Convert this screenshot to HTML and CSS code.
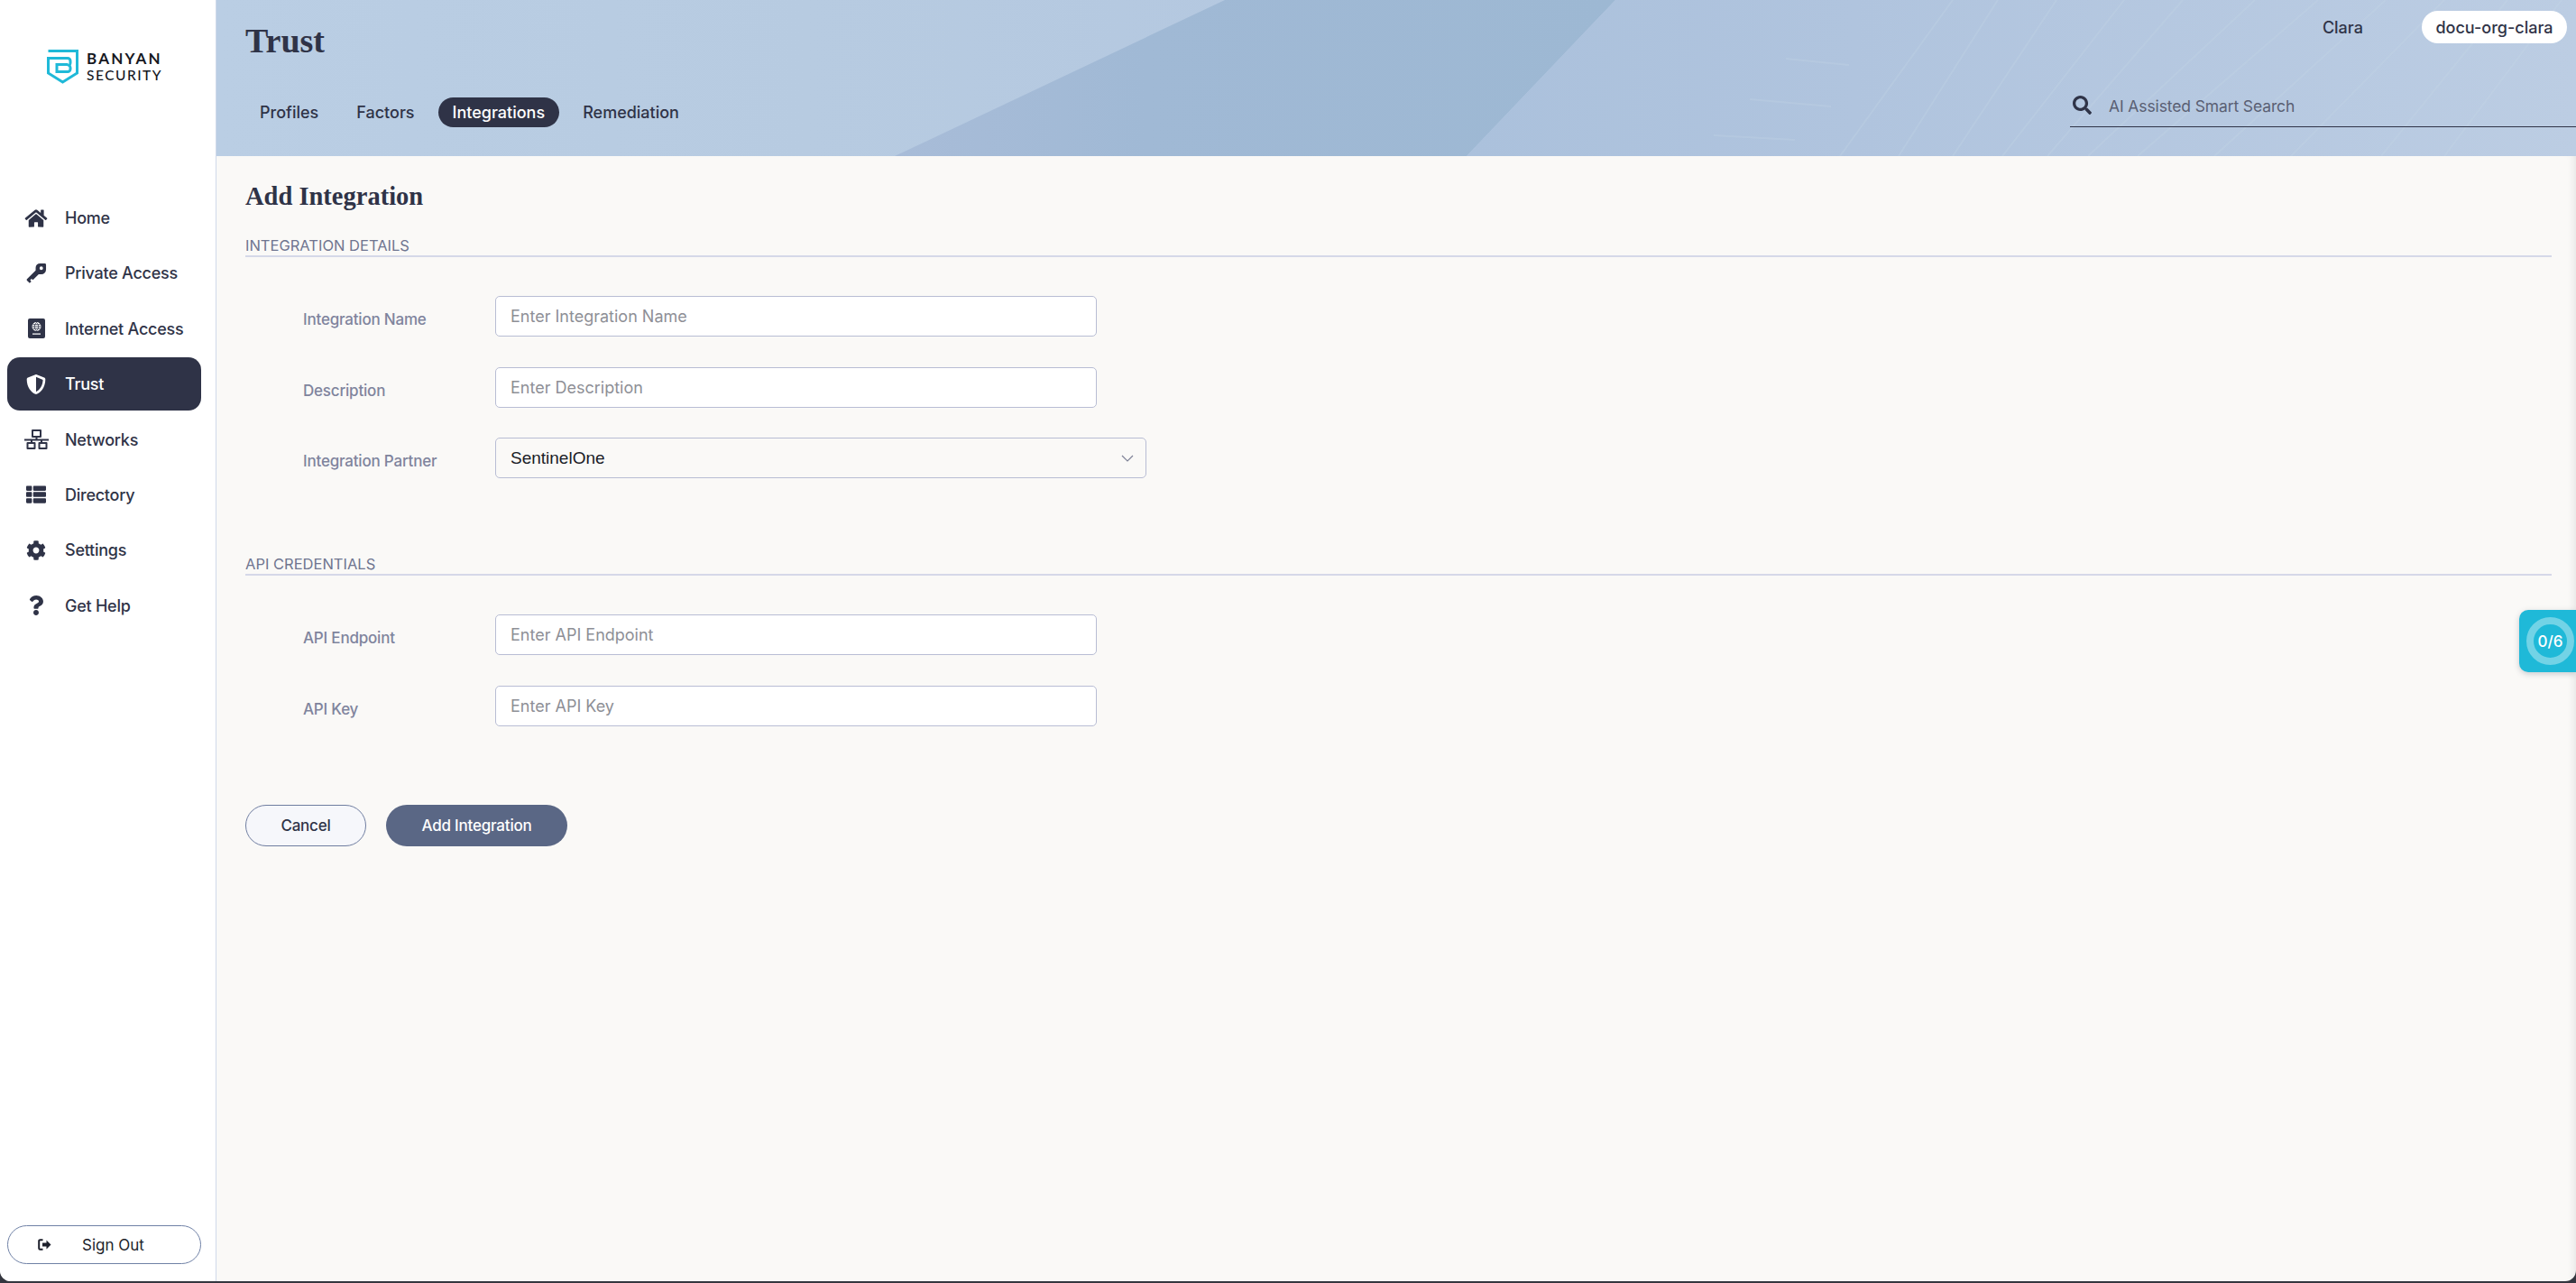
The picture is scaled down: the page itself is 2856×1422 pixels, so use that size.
FILE: index.html
```html
<!DOCTYPE html>
<html lang="en">
<head>
<meta charset="utf-8">
<title>Trust - Add Integration</title>
<link rel="stylesheet" href="styles.css">
</head>
<body>
<div class="app">
  <aside class="sidebar">
    <div class="brand">
      <svg class="brand-mark" viewBox="0 0 35 38" aria-hidden="true"><path d="M1.500 1.500H33.500V26L17.500 36L1.500 26V9.500H23a3 3 0 0 1 3 3v2.500a3 3 0 0 1-1.500 2.500a3 3 0 0 1 1.500 2.500v1.500a3 3 0 0 1-3 3H11V16.500H23.500" fill="none" stroke="#1fb9d8" stroke-width="3"/></svg>
      <div class="brand-text"><span class="brand-top">BANYAN</span><span class="brand-bottom">SECURITY</span></div>
    </div>
    <nav class="side-nav">
      <a class="side-item"><span class="side-icon"><svg viewBox="0 0 576 512"><path d="M280.37 148.26L96 300.11V464a16 16 0 0 0 16 16l112.06-.29a16 16 0 0 0 15.92-16V368a16 16 0 0 1 16-16h64a16 16 0 0 1 16 16v95.64a16 16 0 0 0 16 16.05L464 480a16 16 0 0 0 16-16V300L295.67 148.26a12.19 12.19 0 0 0-15.3 0zM571.6 251.47L488 182.56V44.05a12 12 0 0 0-12-12h-56a12 12 0 0 0-12 12v72.61L318.47 43a48 48 0 0 0-61 0L4.34 251.47a12 12 0 0 0-1.6 16.9l25.5 31A12 12 0 0 0 45.15 301l235.22-193.74a12.19 12.19 0 0 1 15.3 0L530.9 301a12 12 0 0 0 16.9-1.6l25.5-31a12 12 0 0 0-1.7-16.93z"/></svg></span>Home</a>
      <a class="side-item"><span class="side-icon"><svg class="icon-key" viewBox="0 0 24 24"><path fill-rule="evenodd" d="M16 1h5.500a1.500 1.500 0 0 1 1.500 1.500V8a5.500 5.500 0 0 1-5.500 5.500H14.500L7.800 20.200 6.300 18.700 4.600 20.400 6 21.800 4 23.800 1 20.800a1.300 1.300 0 0 1 0-1.800L11 9V6a5 5 0 0 1 5-5zm1.500 3.500a2 2 0 1 0 0 4 2 2 0 0 0 0-4z"/></svg></span>Private Access</a>
      <a class="side-item"><span class="side-icon"><svg class="icon-passport" viewBox="0 0 19 22"><path fill-rule="evenodd" d="M2 0h15a2 2 0 0 1 2 2v18a2 2 0 0 1-2 2H2a2 2 0 0 1-2-2V2a2 2 0 0 1 2-2zm7.500 4a5 5 0 1 0 0 10 5 5 0 0 0 0-10zM5 16.600v1.200h9v-1.200z"/><path d="M4.600 9h9.800M9.500 4.400c-3 3-3 6.200 0 9.200M9.500 4.400c3 3 3 6.200 0 9.200M5.300 6.700h8.400M5.300 11.300h8.400" fill="none" stroke="#2f3347" stroke-width=".8"/></svg></span>Internet Access</a>
      <a class="side-item is-active"><span class="side-icon"><svg viewBox="0 0 512 512"><path d="M466.5 83.7l-192-80a48.15 48.15 0 0 0-36.9 0l-192 80C27.7 91.1 16 108.6 16 128c0 198.5 114.5 335.7 221.5 380.3 11.8 4.9 25.1 4.9 36.9 0C360.1 472.6 496 349.3 496 128c0-19.4-11.7-36.9-29.5-44.3zM256.1 446.3l-.1-381 175.9 73.3c-3.3 151.4-82.1 261.1-175.8 307.7z"/></svg></span>Trust</a>
      <a class="side-item"><span class="side-icon"><svg class="icon-network" viewBox="0 0 27 22"><path fill-rule="evenodd" d="M9 0h9a1 1 0 0 1 1 1v7a1 1 0 0 1-1 1h-3.500v1.500H27v2H20V14h4.500a1 1 0 0 1 1 1v6a1 1 0 0 1-1 1h-8a1 1 0 0 1-1-1v-6a1 1 0 0 1 1-1H18v-1.500H9V14h2.500a1 1 0 0 1 1 1v6a1 1 0 0 1-1 1h-8a1 1 0 0 1-1-1v-6a1 1 0 0 1 1-1H7v-1.500H0v-2h12.500V9H9a1 1 0 0 1-1-1V1a1 1 0 0 1 1-1zm1 2v5h7V2zM4.500 16v4h6v-4zm13 0v4h6v-4z"/></svg></span>Networks</a>
      <a class="side-item"><span class="side-icon"><svg viewBox="0 0 512 512"><path d="M149.333 216v80c0 13.255-10.745 24-24 24H24c-13.255 0-24-10.745-24-24v-80c0-13.255 10.745-24 24-24h101.333c13.255 0 24 10.745 24 24zM0 376v80c0 13.255 10.745 24 24 24h101.333c13.255 0 24-10.745 24-24v-80c0-13.255-10.745-24-24-24H24c-13.255 0-24 10.745-24 24zM125.333 32H24C10.745 32 0 42.745 0 56v80c0 13.255 10.745 24 24 24h101.333c13.255 0 24-10.745 24-24V56c0-13.255-10.745-24-24-24zm80 448H488c13.255 0 24-10.745 24-24v-80c0-13.255-10.745-24-24-24H205.333c-13.255 0-24 10.745-24 24v80c0 13.255 10.745 24 24 24zm-24-424v80c0 13.255 10.745 24 24 24H488c13.255 0 24-10.745 24-24V56c0-13.255-10.745-24-24-24H205.333c-13.255 0-24 10.745-24 24zm24 264H488c13.255 0 24-10.745 24-24v-80c0-13.255-10.745-24-24-24H205.333c-13.255 0-24 10.745-24 24v80c0 13.255 10.745 24 24 24z"/></svg></span>Directory</a>
      <a class="side-item"><span class="side-icon"><svg viewBox="0 0 512 512"><path d="M487.4 315.7l-42.6-24.6c4.3-23.2 4.3-47 0-70.2l42.6-24.6c4.9-2.8 7.1-8.6 5.5-14-11.1-35.6-30-67.8-54.7-94.6-3.8-4.1-10-5.1-14.8-2.3L380.8 110c-17.9-15.4-38.5-27.3-60.8-35.1V25.8c0-5.6-3.9-10.5-9.4-11.7-36.7-8.2-74.3-7.8-109.2 0-5.5 1.2-9.4 6.1-9.4 11.7V75c-22.2 7.9-42.8 19.8-60.8 35.1L88.7 85.5c-4.9-2.8-11-1.9-14.8 2.3-24.7 26.7-43.6 58.9-54.7 94.6-1.7 5.4.6 11.2 5.5 14L67.3 221c-4.3 23.2-4.3 47 0 70.2l-42.6 24.6c-4.9 2.8-7.1 8.6-5.5 14 11.1 35.6 30 67.8 54.7 94.6 3.8 4.1 10 5.1 14.8 2.3l42.6-24.6c17.9 15.4 38.5 27.3 60.8 35.1v49.2c0 5.6 3.9 10.5 9.4 11.7 36.7 8.2 74.3 7.8 109.2 0 5.5-1.2 9.4-6.1 9.4-11.7v-49.2c22.2-7.9 42.8-19.8 60.8-35.1l42.6 24.6c4.9 2.8 11 1.9 14.8-2.3 24.7-26.7 43.6-58.9 54.7-94.6 1.5-5.5-.7-11.3-5.6-14.1zM256 336c-44.1 0-80-35.9-80-80s35.9-80 80-80 80 35.9 80 80-35.9 80-80 80z"/></svg></span>Settings</a>
      <a class="side-item"><span class="side-icon"><svg viewBox="0 0 384 512"><path d="M202.021 0C122.202 0 70.503 32.703 29.914 91.026c-7.363 10.58-5.093 25.086 5.178 32.874l43.138 32.709c10.373 7.865 25.132 6.026 33.253-4.148 25.049-31.381 43.63-49.449 82.757-49.449 30.764 0 68.816 19.799 68.816 49.631 0 22.552-18.617 34.134-48.993 51.164-35.423 19.86-82.299 44.576-82.299 106.405V320c0 13.255 10.745 24 24 24h72.471c13.255 0 24-10.745 24-24v-5.773c0-42.86 125.268-44.645 125.268-160.627C377.504 66.256 286.902 0 202.021 0zM192 373.459c-38.196 0-69.271 31.075-69.271 69.271 0 38.195 31.075 69.27 69.271 69.27s69.271-31.075 69.271-69.271-31.075-69.27-69.271-69.27z"/></svg></span>Get Help</a>
    </nav>
    <button class="sign-out" type="button">
      <svg viewBox="0 0 16 13" aria-hidden="true"><path d="M5.500 1.200H2.500a1.300 1.300 0 0 0-1.300 1.300v8a1.300 1.300 0 0 0 1.300 1.300h3" fill="none" stroke="#1c1f2b" stroke-width="2"/><path d="M9.500 1.500l5 5-5 5v-3H5v-4h4.500z"/></svg>
      <span>Sign Out</span>
    </button>
  </aside>

  <main class="main">
    <header class="topbar">
      <svg class="topbar-art" viewBox="0 0 2616 173" preserveAspectRatio="none" aria-hidden="true">
        <defs>
          <linearGradient id="sky" x1="0" x2="1" y1="0" y2="0"><stop offset="0" stop-color="#bacee4"/><stop offset=".25" stop-color="#b7cbe1"/><stop offset=".45" stop-color="#b4c8e0"/><stop offset="1" stop-color="#b4c8e0"/></linearGradient>
          <linearGradient id="panel" x1="0" x2="1" y1="0" y2="0"><stop offset="0" stop-color="#a8bcd8"/><stop offset=".35" stop-color="#a0b9d5"/><stop offset="1" stop-color="#9db8d3"/></linearGradient>
          <linearGradient id="glass" x1="0" x2="1" y1="0" y2="0"><stop offset="0" stop-color="#abc1dc"/><stop offset=".35" stop-color="#b0c4de"/><stop offset="1" stop-color="#bccde3"/></linearGradient>
        </defs>
        <rect width="2616" height="173" fill="url(#sky)"/>
        <polygon points="1118,0 1551,0 1386,173 752,173" fill="url(#panel)"/>
        <polygon points="1551,0 2616,0 2616,173 1386,173" fill="url(#glass)"/>
        <g fill="none" stroke="#c6d6e6" stroke-width="2" opacity=".28">
          <path d="M1925 0L1800 173M1975 0L1865 173M2040 0L1925 173M2115 0L1980 173M2180 0L2030 173M2260 0L2075 173M2330 0L2130 173M2405 0L2215 173M2470 0L2300 173M2540 0L2400 173M2600 0L2470 173M1700 110L1790 118M1740 65L1810 72M1660 150L1750 155"/>
        </g>
      </svg>
      <div class="topbar-left">
        <h1 class="page-title">Trust</h1>
        <nav class="tabs">
          <a class="tab">Profiles</a>
          <a class="tab">Factors</a>
          <a class="tab is-active">Integrations</a>
          <a class="tab">Remediation</a>
        </nav>
      </div>
      <div class="topbar-right">
        <div class="account">
          <span class="account-name">Clara</span>
          <span class="org-pill">docu-org-clara</span>
        </div>
        <label class="search">
          <svg viewBox="0 0 512 512" aria-hidden="true"><path d="M505 442.7L405.3 343c-4.5-4.5-10.6-7-17-7H372c27.6-35.3 44-79.7 44-128C416 93.1 322.9 0 208 0S0 93.1 0 208s93.1 208 208 208c48.3 0 92.7-16.4 128-44v16.3c0 6.4 2.5 12.5 7 17l99.7 99.7c9.4 9.4 24.6 9.4 33.9 0l28.3-28.3c9.4-9.4 9.4-24.6.1-34zM208 336c-70.7 0-128-57.2-128-128 0-70.7 57.2-128 128-128 70.7 0 128 57.2 128 128 0 70.7-57.2 128-128 128z"/></svg>
          <input type="text" placeholder="AI Assisted Smart Search">
        </label>
      </div>
    </header>

    <section class="content">
      <h2 class="form-title">Add Integration</h2>

      <div class="section-head">INTEGRATION DETAILS</div>
      <div class="fields">
        <div class="field"><label class="field-label">Integration Name</label><input class="field-input" type="text" placeholder="Enter Integration Name"></div>
        <div class="field"><label class="field-label">Description</label><input class="field-input" type="text" placeholder="Enter Description"></div>
        <div class="field"><label class="field-label">Integration Partner</label>
          <div class="field-select"><span>SentinelOne</span><svg viewBox="0 0 14 8" aria-hidden="true"><path d="M1 1l6 6 6-6" fill="none" stroke="#7d8196" stroke-width="1.200"/></svg></div>
        </div>
      </div>

      <div class="section-head section-head-next">API CREDENTIALS</div>
      <div class="fields">
        <div class="field"><label class="field-label">API Endpoint</label><input class="field-input" type="text" placeholder="Enter API Endpoint"></div>
        <div class="field"><label class="field-label">API Key</label><input class="field-input" type="text" placeholder="Enter API Key"></div>
      </div>

      <div class="actions">
        <button class="btn btn-cancel" type="button">Cancel</button>
        <button class="btn btn-primary" type="button">Add Integration</button>
      </div>
    </section>

    <div class="progress-tab"><div class="progress-ring"><span>0/6</span></div></div>
  </main>
</div>
</body>
</html>
```

FILE: styles.css
```css
* { box-sizing: border-box; }
html, body { margin: 0; height: 100%; }
body {
  background: #34363f;
  font-family: Inter, "Noto Sans", sans-serif;
  color: #2f3347;
  overflow: hidden;
}
a { color: inherit; text-decoration: none; }

.app {
  display: flex;
  height: 1420px;
  border-radius: 0 0 12px 12px;
  overflow: hidden;
  background: #faf9f7;
}

.sidebar {
  flex: 0 0 240px;
  display: flex;
  flex-direction: column;
  background: #fff;
  border-right: 1px solid #d0d9ea;
  padding: 0 16px 19px 8px;
}
.brand {
  height: 212px;
  flex: none;
  display: flex;
  align-items: flex-start;
  gap: 9px;
  padding: 55px 0 0 44px;
}
.brand-mark { width: 35px; height: 38px; flex: none; }
.brand-text {
  display: flex;
  flex-direction: column;
  color: #16181f;
  font-family: Lato, sans-serif;
  white-space: nowrap;
}
.brand-top { font-size: 17px; line-height: 18px; letter-spacing: 2.2px; margin-top: 1px; font-weight: 700; }
.brand-bottom { font-size: 15.5px; line-height: 18px; letter-spacing: 1.5px; font-weight: 500; }

.side-nav { display: flex; flex-direction: column; gap: 2.4px; }
.side-item {
  height: 59px;
  display: flex;
  align-items: center;
  border-radius: 14px;
  font-size: 18px;
  font-weight: 500;
  color: #2f3347;
  letter-spacing: -.25px;
}
.side-icon {
  width: 64px;
  padding: 0 19px;
  flex: none;
  display: flex;
  justify-content: center;
}
.side-icon svg { width: 26px; height: 22px; fill: #2f3347; display: block; flex: none; }
.side-icon .icon-key { width: 23px; height: 23px; }
.side-icon .icon-passport { width: 19px; height: 22px; }
.side-icon .icon-network { width: 27px; height: 22px; }
.side-item.is-active { background: #2f3347; color: #fff; }
.side-item.is-active .side-icon svg { fill: #fff; }

.sign-out {
  margin-top: auto;
  width: 215px;
  height: 43px;
  display: flex;
  align-items: center;
  padding: 0 0 0 33px;
  background: #fff;
  border: 1px solid #6f81a6;
  border-radius: 22px;
  font: 400 17px Inter, sans-serif;
  color: #1c1f2b;
}
.sign-out svg { width: 16px; height: 13px; fill: #1c1f2b; margin-right: 33px; }

.main {
  flex: 1;
  min-width: 0;
  position: relative;
  display: flex;
  flex-direction: column;
}

.topbar {
  position: relative;
  flex: 0 0 173px;
  display: flex;
  justify-content: space-between;
  overflow: hidden;
}
.topbar-art { position: absolute; inset: 0; width: 100%; height: 100%; }
.topbar-left { position: relative; padding-left: 32px; }
.page-title {
  margin: 0;
  height: 108px;
  padding-top: 23px;
  font: 700 38px/44px "Liberation Serif", serif;
  color: #2f3347;
}
.tabs { display: flex; align-items: center; height: 33px; gap: 10px; }
.tab {
  height: 33px;
  display: flex;
  align-items: center;
  padding: 0 16px;
  border-radius: 17px;
  font-size: 18px;
  font-weight: 500;
  color: #2f3347;
}
.tab.is-active { background: #2f3347; color: #fff; }

.topbar-right { position: relative; width: 561px; display: flex; flex-direction: column; }
.account {
  height: 48px;
  padding-top: 12px;
  padding-right: 10px;
  display: flex;
  align-items: center;
  justify-content: flex-end;
  gap: 65px;
}
.account-name { font-size: 18px; font-weight: 500; color: #2f3347; }
.org-pill {
  height: 36px;
  display: flex;
  align-items: center;
  padding: 0 15.5px;
  background: #fff;
  border-radius: 18px;
  font-size: 18px;
  font-weight: 500;
  color: #2f3347;
}
.search {
  margin-top: 47px;
  height: 46px;
  display: flex;
  align-items: center;
  gap: 19px;
  padding: 0 0 0 3px;
  border-bottom: 1.5px solid #2f3347;
}
.search svg { width: 21px; height: 21px; fill: #2f3347; flex: none; margin-bottom: 2px; }
.search input {
  flex: 1;
  min-width: 0;
  border: 0;
  background: transparent;
  font: 400 17.5px Inter, sans-serif;
  letter-spacing: -.12px;
  padding: 0;
  outline: 0;
  color: #2f3347;
}
.search input::placeholder { color: #5a5f73; opacity: 1; }

.content {
  flex: 1;
  padding: 27px 27px 0 32px;
  box-shadow: inset -8px 0 10px -7px rgba(40, 45, 60, .12);
}
.form-title {
  margin: 0;
  font: 700 28.5px/36px "Liberation Serif", serif;
  color: #2f3347;
}
.section-head {
  margin-top: 26px;
  height: 23px;
  border-bottom: 2px solid #d5d8e8;
  font-size: 16.5px;
  line-height: 20px;
  font-weight: 400;
  color: #6f7590;
}
.section-head-next { margin-top: 85px; }
.fields { display: flex; flex-direction: column; gap: 33.5px; padding-top: 43px; }
.field { display: flex; align-items: center; padding-left: 64px; }
.field-label {
  flex: 0 0 213px;
  padding-top: 7px;
  font-size: 17px;
  font-weight: 500;
  color: #7f849d;
  letter-spacing: -.2px;
}
.field-input, .field-select {
  height: 45px;
  border: 1px solid #b8bdd4;
  border-radius: 5px;
  background: #fff;
}
.field-input {
  width: 667px;
  padding: 0 16px;
  font: 400 18px Inter, sans-serif;
  outline: 0;
}
.field-input::placeholder { color: #8e8f96; opacity: 1; }
.field-select {
  width: 722px;
  display: flex;
  align-items: center;
  justify-content: space-between;
  padding: 0 13px 0 16px;
  background: #faf9f7;
  font: 400 19px "Liberation Sans", Arial, sans-serif;
  color: #1a1c26;
}
.field-select svg { width: 14px; height: 8px; }

.actions { display: flex; gap: 22px; margin-top: 87px; }
.btn {
  height: 46px;
  border-radius: 23px;
  font: 500 17px Inter, sans-serif;
  letter-spacing: -.2px;
}
.btn-cancel { width: 134px; background: #f6f7fb; border: 1px solid #6f7da0; color: #2f3347; }
.btn-primary { width: 201px; background: #5a6785; border: 0; color: #fff; }

.progress-tab {
  position: absolute;
  right: 0;
  top: 676px;
  width: 63px;
  height: 69px;
  padding: 8px 0 0 8px;
  background: #1fb9d8;
  border-radius: 10px 0 0 10px;
  box-shadow: 0 2px 6px rgba(60, 70, 90, .25);
}
.progress-ring {
  width: 53px;
  height: 53px;
  border: 8px solid #72d3e6;
  border-radius: 50%;
  display: flex;
  align-items: center;
  justify-content: center;
  color: #fff;
  font-size: 17px;
  font-weight: 500;
}
```
